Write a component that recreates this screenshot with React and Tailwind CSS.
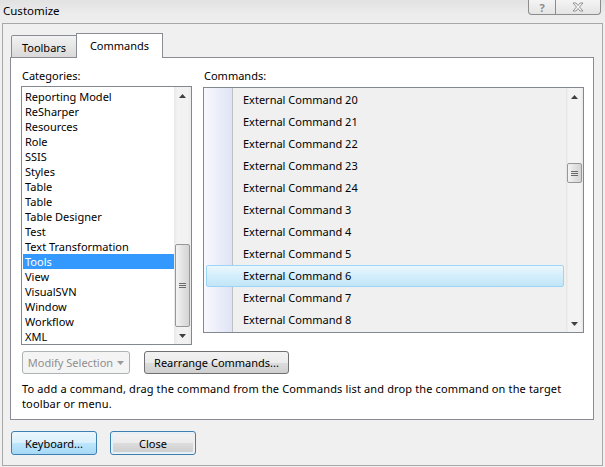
import React from "react";

const categories = [
  "Reporting Model", "ReSharper", "Resources", "Role", "SSIS", "Styles", "Table", "Table",
  "Table Designer", "Test", "Text Transformation", "Tools", "View", "VisualSVN", "Window",
  "Workflow", "XML",
];
const commands = ["20", "21", "22", "23", "24", "3", "4", "5", "6", "7", "8"];

function UpArrow() {
  return (
    <svg width="7" height="4" viewBox="0 0 7 4"><polygon points="0,4 3.5,0 7,4" fill="#404040" /></svg>
  );
}
function DownArrow() {
  return (
    <svg width="7" height="4" viewBox="0 0 7 4"><polygon points="0,0 7,0 3.5,4" fill="#404040" /></svg>
  );
}
function Thumb({ h }) {
  return (
    <div className={`mx-[1px] rounded-[2px] border border-[#979797] bg-[linear-gradient(to_right,#f4f4f4,#e2e2e2_50%,#d4d4d4)] flex flex-col items-center justify-center gap-[1px] ${h}`}>
      <div className="w-[7px] h-[1px] bg-[#6a6a6a]" />
      <div className="w-[7px] h-[1px] bg-[#6a6a6a]" />
      <div className="w-[7px] h-[1px] bg-[#6a6a6a]" />
    </div>
  );
}

export default function App() {
  return (
    <div className="w-[605px] h-[467px] bg-[#f0f0f0] overflow-hidden text-[11px] text-black font-['Noto_Sans',sans-serif]">
      {/* title bar */}
      <div className="h-[23px] flex justify-between bg-[linear-gradient(to_bottom,#e2e2e2,#ececec_60%,#eeeeee)]">
        <div className="pl-[3px] pt-[3px] leading-[15px] text-[11.5px]">Customize</div>
        <div className="flex mr-[4px] h-[15px]">
          <div className="w-[28px] border border-t-0 border-[#8c8c8c] rounded-bl-[4px] bg-[linear-gradient(to_bottom,#f4f4f4,#e4e4e4)] flex items-center justify-center text-[11px] leading-none font-bold text-[#8a8a8a]">?</div>
          <div className="w-[45px] border border-t-0 border-l-0 border-[#8c8c8c] rounded-br-[4px] bg-[linear-gradient(to_bottom,#f4f4f4,#e4e4e4)] flex items-center justify-center">
            <svg width="12" height="10" viewBox="0 0 12 10">
              <path d="M1 1 L4 1 L6 3.5 L8 1 L11 1 L7.5 5 L11 9 L8 9 L6 6.5 L4 9 L1 9 L4.5 5 Z" fill="#f6f6f6" stroke="#8a8a8a" strokeWidth="0.9" />
            </svg>
          </div>
        </div>
      </div>

      {/* frame */}
      <div className="ml-[2px] w-[601px] h-[443px] border border-[#a8a8a8] pt-[9px] pl-[7px]">
        {/* tabs */}
        <div className="flex items-end h-[24px] pl-[1px]">
          <div className="w-[66px] h-[22px] border border-b-0 border-[#898c95] rounded-tl-[2px] bg-[linear-gradient(to_bottom,#f2f2f2,#e6e6e6_50%,#d9d9d9)] flex items-center justify-center leading-[15px] pt-[1px]">Toolbars</div>
          <div className="-ml-px relative z-10 -mb-px w-[87px] h-[25px] border border-b-0 border-[#898c95] bg-white flex justify-center leading-[15px] pt-[4px]">Commands</div>
        </div>

        {/* panel */}
        <div className="w-[584px] h-[363px] border border-[#898c95] bg-white pl-[10px] flex flex-col">
          <div className="flex">
            {/* categories */}
            <div className="w-[171px] flex flex-col">
              <div className="h-[28px] pt-[10px] pl-[1px] leading-[15px]">Categories:</div>
              <div className="h-[259px] border border-[#828790] bg-white flex">
                <div className="flex-1 pt-[2px] pl-[1px] flex flex-col">
                  {categories.map((c, i) => (
                    <div
                      key={i}
                      className={`h-[15px] leading-[15px] pl-[2px] whitespace-nowrap ${c === "Tools" && i === 11 ? "bg-[#3399ff] text-white" : ""}`}
                    >
                      {c}
                    </div>
                  ))}
                </div>
                <div className="w-[17px] flex flex-col bg-[linear-gradient(to_right,#e8e8e8,#f2f2f2_20%,#f2f2f2_80%,#ebebeb)]">
                  <div className="h-[17px] flex items-center justify-center"><UpArrow /></div>
                  <div className="flex-1" />
                  <Thumb h="h-[83px]" />
                  <div className="h-[17px] flex items-center justify-center"><DownArrow /></div>
                </div>
              </div>
            </div>

            {/* commands */}
            <div className="ml-[11px] w-[381px] flex flex-col">
              <div className="h-[28px] pt-[10px] pl-[1px] leading-[15px]">Commands:</div>
              <div className="mt-[1px] h-[246px] border border-[#828790] flex bg-[linear-gradient(to_right,#f8f9fe,#dfe3f4_28px,#bfc0c4_28px,#bfc0c4_29px,#f0f0f0_29px)]">
                <div className="flex-1 pt-[1px] px-[2px] flex flex-col">
                  {commands.map((n) => (
                    <div
                      key={n}
                      className={`h-[22px] leading-[20px] pl-[36px] whitespace-nowrap border rounded-[2px] ${n === "6" ? "border-[#9dd5f7] bg-[linear-gradient(to_bottom,#ecf7fd,#d3eefb_50%,#c2e5f7)]" : "border-transparent"}`}
                    >
                      External Command {n}
                    </div>
                  ))}
                </div>
                <div className="w-[17px] flex flex-col bg-[linear-gradient(to_right,#e4e4e4,#f3f3f3_15%,#f3f3f3_85%,#e8e8e8)]">
                  <div className="h-[17px] flex items-center justify-center"><UpArrow /></div>
                  <div className="h-[58px]" />
                  <Thumb h="h-[20px]" />
                  <div className="flex-1" />
                  <div className="h-[17px] flex items-center justify-center"><DownArrow /></div>
                </div>
              </div>
            </div>
          </div>

          {/* buttons */}
          <div className="flex mt-[6px] pl-[1px]">
            <div className="w-[108px] h-[23px] border border-[#adb2b5] rounded-[3px] bg-[#f4f4f4] text-[#8f8f8f] flex items-center justify-center gap-[4px] leading-[15px]">
              <span>Modify Selection</span>
              <svg width="7" height="4" viewBox="0 0 7 4"><polygon points="0,0 7,0 3.5,4" fill="#9a9a9a" /></svg>
            </div>
            <div className="ml-[14px] w-[145px] h-[23px] border border-[#707070] rounded-[3px] bg-[linear-gradient(to_bottom,#f2f2f2_0%,#ebebeb_50%,#dddddd_50%,#cfcfcf_100%)] flex items-center justify-center leading-[15px]">
              Rearrange Commands...
            </div>
          </div>

          <div className="mt-[7px] pl-[1px] leading-[15px] whitespace-nowrap tracking-[0.14px]">
            To add a command, drag the command from the Commands list and drop the command on the target
            <br />
            toolbar or menu.
          </div>
        </div>

        {/* bottom buttons */}
        <div className="flex mt-[11px] ml-[1px]">
          <div className="w-[86px] h-[24px] border border-[#3c7fb1] rounded-[3px] bg-[linear-gradient(to_bottom,#eaf6fd_0%,#d9f0fc_50%,#bee6fd_50%,#a7d9f5_100%)] flex items-center justify-center leading-[15px]">
            Keyboard...
          </div>
          <div className="ml-[13px] w-[86px] h-[24px] border border-[#3c7fb1] rounded-[3px] p-px">
            <div className="w-full h-full rounded-[2px] border border-[#dff2fc] bg-[linear-gradient(to_bottom,#f2f2f2_0%,#ebebeb_50%,#dddddd_50%,#cfcfcf_100%)] flex items-center justify-center leading-[15px]">
              Close
            </div>
          </div>
        </div>
      </div>
    </div>
  );
}
